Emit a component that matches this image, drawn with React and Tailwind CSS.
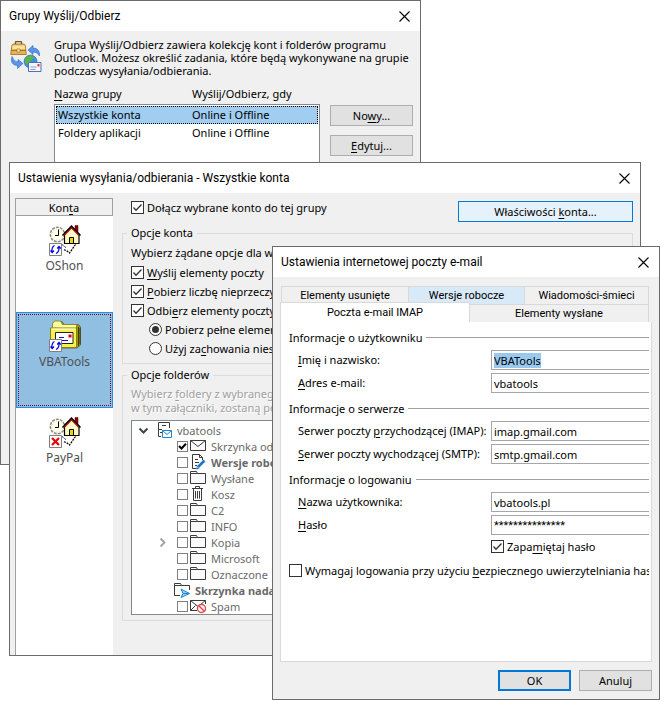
import { useEffect, useRef } from 'react';

// "&" marks the access key, like in Win32 resources
function Label({ text }) {
  const i = text.indexOf('&');
  if (i < 0) return <span>{text}</span>;
  return (
    <span>
      {text.slice(0, i)}
      <span className="underline underline-offset-2">{text[i + 1]}</span>
      {text.slice(i + 2)}
    </span>
  );
}

function CheckBox({ text, checked, className = '' }) {
  return (
    <label className={`flex items-center gap-[3px] whitespace-nowrap ${className}`}>
      <span className="grid shrink-0">
        <input
          type="checkbox"
          defaultChecked={checked}
          className="peer col-start-1 row-start-1 h-[13px] w-[13px] appearance-none border border-[#333] bg-white"
        />
        <svg viewBox="0 0 13 13" className="pointer-events-none invisible col-start-1 row-start-1 h-[13px] w-[13px] peer-checked:visible">
          <path d="M2.500 6.500 5 9.200 10.500 3.500" fill="none" stroke="#333" strokeWidth="1.300" />
        </svg>
      </span>
      <Label text={text} />
    </label>
  );
}

function Radio({ text, checked }) {
  return (
    <label className="ml-[18px] flex h-[19px] items-center gap-[3px] whitespace-nowrap">
      <span className="grid shrink-0 place-items-center">
        <input
          type="radio"
          name="imap-mode"
          defaultChecked={checked}
          className="peer col-start-1 row-start-1 h-[13px] w-[13px] appearance-none rounded-full border border-[#333] bg-white"
        />
        <span className="pointer-events-none invisible col-start-1 row-start-1 h-[7px] w-[7px] rounded-full bg-[#333] peer-checked:visible" />
      </span>
      <Label text={text} />
    </label>
  );
}

function TitleBar({ title }) {
  return (
    <header className="flex h-[30px] shrink-0 items-center justify-between bg-white pr-[9px] pl-2 font-[Roboto,sans-serif] text-[12px]">
      <h2 className="whitespace-nowrap">{title}</h2>
      <button type="button" aria-label="Zamknij" className="p-px">
        <svg viewBox="0 0 11 11" className="h-[11px] w-[11px]">
          <path d="M.5 .5 10.5 10.5 M10.5 .5 .5 10.5" stroke="#000" strokeWidth="1.1" />
        </svg>
      </button>
    </header>
  );
}

function Button({ text, className = 'w-[83px] border border-[#adadad] bg-[#e1e1e1]' }) {
  return (
    <button type="button" className={`h-[21px] leading-none ${className}`}>
      <Label text={text} />
    </button>
  );
}

function SendReceiveIcon() {
  return (
    <svg viewBox="0 0 32 32" className="h-8 w-8 shrink-0">
      <path d="M5.500 4V1.500q0-1 1-1h4q1 0 1 1V4" fill="none" stroke="#7a4f14" strokeWidth="1.300" />
      <path d="M2 4Q2.500 3 4 3H13.500Q15 3 15.300 4.500L16.300 13.500H.7Z" fill="#e6b654" stroke="#9c6a20" strokeWidth=".8" />
      <path d="M2.500 4.500H14.800L15.200 8H2Z" fill="#fae2a4" />
      <path d="M1 9.500H16" stroke="#96651f" strokeWidth=".8" />
      <path d="M7 8h3v3h-3z" fill="#fff1b8" stroke="#96651f" strokeWidth=".6" />
      <path d="M18 9 23 4.500V7Q30 7 29.500 15 27 10.500 23 11V13.500Z" fill="#5b96ec" stroke="#2c62c4" strokeWidth=".6" />
      <path d="M2 15.500Q-.5 24 7.500 24.500V27.500L13 22.500 8 18.500V21Q4 21 2 15.500Z" fill="#5b96ec" stroke="#2c62c4" strokeWidth=".6" />
      <circle cx="20.500" cy="20.500" r="6.500" fill="#3f8de6" stroke="#2762ad" strokeWidth=".6" />
      <path d="M15 18Q17 14 21.500 14.500L25 17 21 19 20.500 22 18 24Q14 22 15 18Z" fill="#58b643" />
      <path d="M18.500 21.500H31V30.500H18.500Z" fill="#f3f6fc" stroke="#4a72ba" />
      <path d="M20.500 26h6M20.500 28.500h5" stroke="#7d92b8" strokeWidth=".9" />
      <path d="M27.500 23h2v2.500h-2z" fill="#e03a2e" />
    </svg>
  );
}

function StatusBadge({ blocked }) {
  return (
    <g>
      <path d="M.5 19.500H12.500V31.500H.5Z" fill="#fff" stroke="#808080" />
      {blocked ? (
        <path d="M3 22 10 29M10 22 3 29" stroke="#f00000" strokeWidth="2.200" />
      ) : (
        <g fill="none" stroke="#0000e0" strokeWidth="1.200">
          <path d="M5.500 21.500Q2.500 23 3 28M1.500 26.500 3.200 28.500 5 26.500" />
          <path d="M7 29.500Q10.500 28 10 23M8.200 24.500 10 22.500 11.800 24.500" />
        </g>
      )}
    </g>
  );
}

function HouseIcon({ blocked }) {
  return (
    <svg viewBox="0 0 32 32" className="h-8 w-8 shrink-0">
      <path d="M12 21 16 19.500H27L20.500 29 17 26.500 13 25Z" fill="#fff" />
      <path d="M26.500 20.500 20.500 29 17.500 26.500 14 25.500" fill="none" stroke="#000" strokeWidth="1.200" strokeDasharray="2 1" />
      <path d="M13 20.500 17.500 24" fill="none" stroke="#1a1a80" strokeDasharray="2 1" />
      <circle cx="8.500" cy="10.500" r="7.200" fill="#fffff0" stroke="#8c8c8c" strokeWidth="1.500" strokeDasharray="3 1" />
      <circle cx="8.500" cy="10.500" r="5.500" fill="none" stroke="#e8e870" strokeDasharray="1 2" />
      <path d="M9.500 5.500V11.500H6" fill="none" stroke="#000" />
      <path d="M26 1.500H29V8L26 5Z" fill="#8b0000" stroke="#500" strokeWidth=".5" />
      <path d="M15.500 9.500 22.500 3 30 10V19.500H15.500Z" fill="#fffbc4" stroke="#000" strokeWidth="1.200" />
      <path d="M13.500 11.500 22.500 2 31.500 11.500" fill="none" stroke="#000" strokeWidth="1.500" />
      <path d="M15 11.500 22.500 3.800 30 11.500" fill="none" stroke="#9a1010" strokeWidth="1.300" />
      <path d="M20.500 13.500h4v6h-4z" fill="#e5d900" stroke="#000" />
      <StatusBadge blocked={blocked} />
    </svg>
  );
}

function MailFolderIcon() {
  return (
    <svg viewBox="0 0 32 32" className="h-8 w-8 shrink-0">
      <path d="M6 5 7.500 1.500H13L15 4.500H29.500L31.500 7V25L28 28H6Z" fill="#a09b00" stroke="#555" strokeWidth=".8" />
      <path d="M3.500 7.500V3.500L5.500 1H11.500L13.500 4.500H27.500V9" fill="#fffb9c" stroke="#8a8a2a" />
      <path d="M29.500 7V26M31 8V24" stroke="#3c3a00" />
      <path d="M1.500 8H27.500V27.500H1.500Z" fill="#f9f24d" stroke="#85801a" />
      <path d="M2.500 9H26.500" stroke="#fff" />
      <path d="M6.500 12.500H24V23.500H6.500Z" fill="#fff" stroke="#222" />
      <path d="M19.500 14.500h3v3h-3z" fill="#e00000" />
      <path d="M10 17.500h5M13 20.500h6" stroke="#1010c0" strokeWidth="1.200" />
      <StatusBadge />
    </svg>
  );
}

function TreeIcon({ kind }) {
  return (
    <svg viewBox="0 0 16 16" className="h-4 w-4 shrink-0" fill="none" stroke="#3b3b3b">
      {kind === 'store' && (
        <>
          <path d="M12.500 6V.5H1.500V14.500H4M1.500 7.500H5M5 3.500h4M3 10.500h2" />
          <path d="M5.500 8.500H14.500V15.500H5.500ZM5.500 8.500 10 12.500 14.500 8.500" stroke="#1e86d0" fill="#fff" />
        </>
      )}
      {kind === 'mail' && <path d="M.5 2.500H15.500V12.500H.5ZM.5 2.500 8 8.500 15.500 2.500" fill="#fafafa" />}
      {kind === 'draft' && (
        <>
          <path d="M12.500 6V3.500L9.500 .5H2.500V14.500H6M9.500 .5V3.500H12.500M5 5.500h3M5 8.500h4M5 11.500h2" />
          <path d="M14.500 6.500 8 13" stroke="#1e78c8" strokeWidth="2.600" />
          <path d="M7.500 12 6.500 15 9.300 14" stroke="#1e78c8" />
        </>
      )}
      {kind === 'folder' && <path d="M.5 13.500V1.500H6.500L7.500 3.500H15.500V13.500ZM.5 3.500H7.500" fill="#fafafa" />}
      {kind === 'bin' && <path d="M2 2.500H13M5.500 2V.5H9.500V2M3.500 3V14.500H11.500V3M5.500 5V12.500M7.500 5V12.500M9.500 5V12.500" />}
      {kind === 'outbox' && (
        <>
          <path d="M6 13.500H.5V1.500H6.500L7.500 3.500H15.500V8M.5 3.500H7.500" />
          <path d="M7 7 15.500 11.500 7 15.500 9 11.500ZM9 11.500H15" stroke="#1e86d0" fill="#9fd0f2" />
        </>
      )}
      {kind === 'spam' && (
        <>
          <path d="M7 12.500H.5V2.500H15.500V6M.5 2.500 8 8.500 15.500 2.500M.5 12.500 5.500 7.500" />
          <circle cx="11.500" cy="10.500" r="4" stroke="#e04848" strokeWidth="1.400" fill="#fff" />
          <path d="M8.800 7.800 14.300 13.300" stroke="#e04848" strokeWidth="1.400" />
        </>
      )}
    </svg>
  );
}

const groups = [
  { name: 'Wszystkie konta', when: 'Online i Offline', selected: true },
  { name: 'Foldery aplikacji', when: 'Online i Offline' },
];

const folders = [
  { name: 'Skrzynka odbiorcza', kind: 'mail', checked: true },
  { name: 'Wersje robocze', kind: 'draft', bold: true },
  { name: 'Wysłane', kind: 'folder' },
  { name: 'Kosz', kind: 'bin' },
  { name: 'C2', kind: 'folder' },
  { name: 'INFO', kind: 'folder' },
  { name: 'Kopia', kind: 'folder', expandable: true },
  { name: 'Microsoft', kind: 'folder' },
  { name: 'Oznaczone', kind: 'folder' },
  { name: 'Skrzynka nadawcza', kind: 'outbox', bold: true, noCheck: true },
  { name: 'Spam', kind: 'spam' },
];

const sections = [
  {
    title: 'Informacje o użytkowniku',
    fields: [
      { id: 'name', label: '&Imię i nazwisko:', value: 'VBATools' },
      { id: 'email', label: '&Adres e-mail:', value: 'vbatools' },
    ],
  },
  {
    title: 'Informacje o serwerze',
    fields: [
      { id: 'imap', label: 'Serwer poczty &przychodzącej (IMAP):', value: 'imap.gmail.com' },
      { id: 'smtp', label: '&Serwer poczty wychodzącej (SMTP):', value: 'smtp.gmail.com' },
    ],
  },
  {
    title: 'Informacje o logowaniu',
    fields: [
      { id: 'user', label: '&Nazwa użytkownika:', value: 'vbatools.pl' },
      { id: 'pass', label: '&Hasło', value: '***************', masked: true },
    ],
  },
];

function GroupsWindow() {
  return (
    <section className="absolute top-0 left-0 flex min-h-[465px] w-[421px] flex-col border border-[#6b6b6b] bg-[#f0f0f0]">
      <TitleBar title="Grupy Wyślij/Odbierz" />
      <div className="flex pt-[7px] pr-[7px] pl-[9px]">
        <div className="w-11 shrink-0 pt-[3px]">
          <SendReceiveIcon />
        </div>
        <div className="flex-1">
          <p className="leading-[13px] whitespace-nowrap">
            Grupa Wyślij/Odbierz zawiera kolekcję kont i folderów programu
            <br />
            Outlook. Możesz określić zadania, które będą wykonywane na grupie
            <br />
            podczas wysyłania/odbierania.
          </p>
          <div className="mt-[9px] flex items-start justify-between">
            <table className="block w-[266px]">
              <thead className="block">
                <tr className="flex h-[18px] items-start">
                  <th className="w-[138px] text-left font-normal"><Label text="&Nazwa grupy" /></th>
                  <th className="font-normal">Wyślij/Odbierz, gdy</th>
                </tr>
              </thead>
              <tbody className="block h-[200px] border border-[#828790] bg-white p-px">
                {groups.map((g) => (
                  <tr
                    key={g.name}
                    className={`flex h-[18px] items-center border border-dotted pl-px leading-[14px] ${g.selected ? 'border-black bg-[#a1cdf0]' : 'border-transparent'}`}
                  >
                    <td className="w-[134px]">{g.name}</td>
                    <td>{g.when}</td>
                  </tr>
                ))}
              </tbody>
            </table>
            <div className="mt-[19px] flex flex-col gap-[9px]">
              <Button text="No&wy..." />
              <Button text="&Edytuj..." />
            </div>
          </div>
        </div>
      </div>
    </section>
  );
}

function AccountItem({ name, icon, selected }) {
  return (
    <li>
      <button
        type="button"
        className={`h-24 w-full border p-px text-[12px] text-[#505050] ${selected ? 'border-[#2d8edb] bg-[#91bfe2]' : 'border-transparent'}`}
      >
        <span
          className={`flex h-full flex-col items-center gap-[2px] border border-dotted pt-[5px] ${selected ? 'border-[#5a1030]' : 'border-transparent'}`}
        >
          {icon}
          <span>{name}</span>
        </span>
      </button>
    </li>
  );
}

function SettingsWindow() {
  return (
    <section className="absolute top-[162px] left-[9px] flex w-[632px] flex-col border border-[#6b6b6b] bg-[#f0f0f0]">
      <TitleBar title="Ustawienia wysyłania/odbierania - Wszystkie konta" />
      <div className="flex gap-[9px] pt-[5px] pr-[7px] pl-[5px]">
        <aside className="flex w-[98px] shrink-0 flex-col border-l border-[#a0a0a0] bg-white">
          <h3 className="flex h-[18px] items-center justify-center border border-l-0 border-[#a0a0a0] bg-[#f0f0f0]">
            <Label text="Kon&ta" />
          </h3>
          <ul>
            <AccountItem name="OShon" icon={<HouseIcon />} />
            <AccountItem name="VBATools" icon={<MailFolderIcon />} selected />
            <AccountItem name="PayPal" icon={<HouseIcon blocked />} />
          </ul>
        </aside>
        <div className="flex min-w-0 flex-1 flex-col pb-[34px]">
          <div className="flex h-[27px] items-center justify-between pl-[9px]">
            <CheckBox text="Dołącz wybrane konto do tej grupy" checked className="-mt-2" />
            <Button text="Właściwości &konta..." className="w-[175px] border border-[#0078d7] bg-[#e5f1fb]" />
          </div>
          <fieldset className="border border-[#dcdcdc] px-2 pb-[5px]">
            <legend className="-ml-1 h-4 px-1 leading-4">Opcje konta</legend>
            <p className="h-[22px] leading-[23px] whitespace-nowrap">Wybierz żądane opcje dla wybranej grupy</p>
            <CheckBox text="&Wyślij elementy poczty" checked className="h-[19px]" />
            <CheckBox text="&Pobierz liczbę nieprzeczytanych" checked className="h-[19px]" />
            <CheckBox text="Odbi&erz elementy poczty" checked className="h-[19px]" />
            <Radio text="Pobierz pełne elementy" checked />
            <Radio text="Użyj za&chowania niestandardowego" />
          </fieldset>
          <fieldset className="mt-[3px] border border-[#dcdcdc] px-2 pb-[5px]">
            <legend className="-ml-1 h-4 px-1 leading-4">Opcje folderów</legend>
            <p className="pt-1 leading-[14px] whitespace-nowrap text-[#a0a0a0] text-shadow-[1px_1px_0_#fff]">
              <Label text="Wybierz &foldery z wybranego konta" />
              <br />
              w tym załączniki, zostaną pobrane
            </p>
            <div className="mt-[5px] border border-[#828790] bg-white pt-px text-[#6a6a6a]">
              <div className="flex h-4 items-center pl-[6px]">
                <svg viewBox="0 0 11 11" className="h-[11px] w-[11px]">
                  <path d="M1.500 3.500 5.500 7.500 9.500 3.500" fill="none" stroke="#444" strokeWidth="2" />
                </svg>
                <span className="mr-1 ml-2"><TreeIcon kind="store" /></span>
                vbatools
              </div>
              <ul>
                {folders.map((f) => (
                  <li key={f.name} className="flex h-4 items-center pl-[26px]">
                    <span className="flex w-4 shrink-0">
                      {f.expandable && (
                        <svg viewBox="0 0 9 9" className="h-[9px] w-[9px]">
                          <path d="M2.500 .5 6.500 4.500 2.500 8.500" fill="none" stroke="#a0a0a0" strokeWidth="1.800" />
                        </svg>
                      )}
                    </span>
                    <label className={`flex items-center whitespace-nowrap ${f.bold ? 'font-bold' : ''}`}>
                      {!f.noCheck && (
                        <span className="ml-[3px] grid w-[13px] shrink-0">
                          <input
                            type="checkbox"
                            defaultChecked={f.checked}
                            className="peer col-start-1 row-start-1 h-[11px] w-[11px] appearance-none border border-[#808080] bg-white"
                          />
                          <svg viewBox="0 0 11 11" className="pointer-events-none invisible col-start-1 row-start-1 h-[11px] w-[11px] peer-checked:visible">
                            <path d="M2 5 4.500 7.500 9 2.800" fill="none" stroke="#000" strokeWidth="2" />
                          </svg>
                        </span>
                      )}
                      <span className="mr-[5px]"><TreeIcon kind={f.kind} /></span>
                      {f.name}
                    </label>
                  </li>
                ))}
              </ul>
            </div>
          </fieldset>
        </div>
      </div>
    </section>
  );
}

function MailWindow() {
  const nameRef = useRef(null);

  useEffect(() => {
    nameRef.current.focus();
    nameRef.current.select();
  }, []);

  return (
    <section className="absolute top-[246px] left-[272px] flex w-[388px] flex-col border border-[#6b6b6b] bg-[#f0f0f0]">
      <TitleBar title="Ustawienia internetowej poczty e-mail" />
      <div className="flex flex-col px-[7px] pt-[9px] pb-2">
        <div role="tablist" className="font-[Roboto,sans-serif]">
          <div className="mr-[3px] ml-px flex h-[18px] border-t border-r border-[#d9d9d9]">
            <button type="button" role="tab" className="w-[127px] border-l border-[#d9d9d9]">Elementy usunięte</button>
            <button type="button" role="tab" className="w-[116px] border-l border-[#d9d9d9] bg-[#d8e9f8]">Wersje robocze</button>
            <button type="button" role="tab" className="flex-1 border-l border-[#d9d9d9]">Wiadomości-śmieci</button>
          </div>
          <div className="mr-[3px] flex h-[18px]">
            <button type="button" role="tab" aria-selected="true" className="-mt-[2px] w-[190px] border border-b-0 border-[#d9d9d9] bg-white">
              Poczta e-mail IMAP
            </button>
            <button type="button" role="tab" className="flex-1 border-t border-r border-[#d9d9d9]">Elementy wysłane</button>
          </div>
        </div>
        <form className="border border-t-0 border-[#d9d9d9] bg-white pt-[5px] pr-[2px] pb-[81px] pl-2">
          {sections.map((s) => (
            <div key={s.title} className="mb-[5px]">
              <h3 className="mb-[3px] flex h-5 items-center gap-1 whitespace-nowrap">
                {s.title}
                <span className="h-px flex-1 bg-[#a0a0a0]" />
              </h3>
              <div className="flex flex-col gap-[3px]">
                {s.fields.map((f) => (
                  <div key={f.id} className="flex pl-[9px]">
                    <label htmlFor={f.id} className="w-[193px] shrink-0 leading-5 whitespace-nowrap">
                      <Label text={f.label} />
                    </label>
                    <input
                      id={f.id}
                      ref={f.id === 'name' ? nameRef : null}
                      defaultValue={f.value}
                      className={`h-5 min-w-0 flex-1 border border-r-0 border-[#a5a5ad] bg-white px-[2px] outline-none selection:bg-[#99c9ef] selection:text-black ${f.masked ? 'font-[Roboto,sans-serif]' : ''}`}
                    />
                  </div>
                ))}
              </div>
            </div>
          ))}
          <CheckBox text="Zapa&miętaj hasło" checked className="-mt-1 ml-[202px] h-5" />
          <CheckBox text="Wymagaj logowania przy użyciu &bezpiecznego uwierzytelniania hasła" className="mt-1 h-5 overflow-hidden" />
        </form>
        <div className="mt-2 flex justify-end gap-2">
          <Button text="OK" className="w-[73px] border-2 border-[#0078d7] bg-[#e1e1e1]" />
          <Button text="Anuluj" className="w-[73px] border border-[#adadad] bg-[#e1e1e1]" />
        </div>
      </div>
    </section>
  );
}

export default function App() {
  return (
    <main className="relative min-h-screen overflow-hidden bg-white font-['Noto_Sans','Open_Sans',sans-serif] text-[11px] leading-[15px] text-black">
      <GroupsWindow />
      <SettingsWindow />
      <MailWindow />
    </main>
  );
}
